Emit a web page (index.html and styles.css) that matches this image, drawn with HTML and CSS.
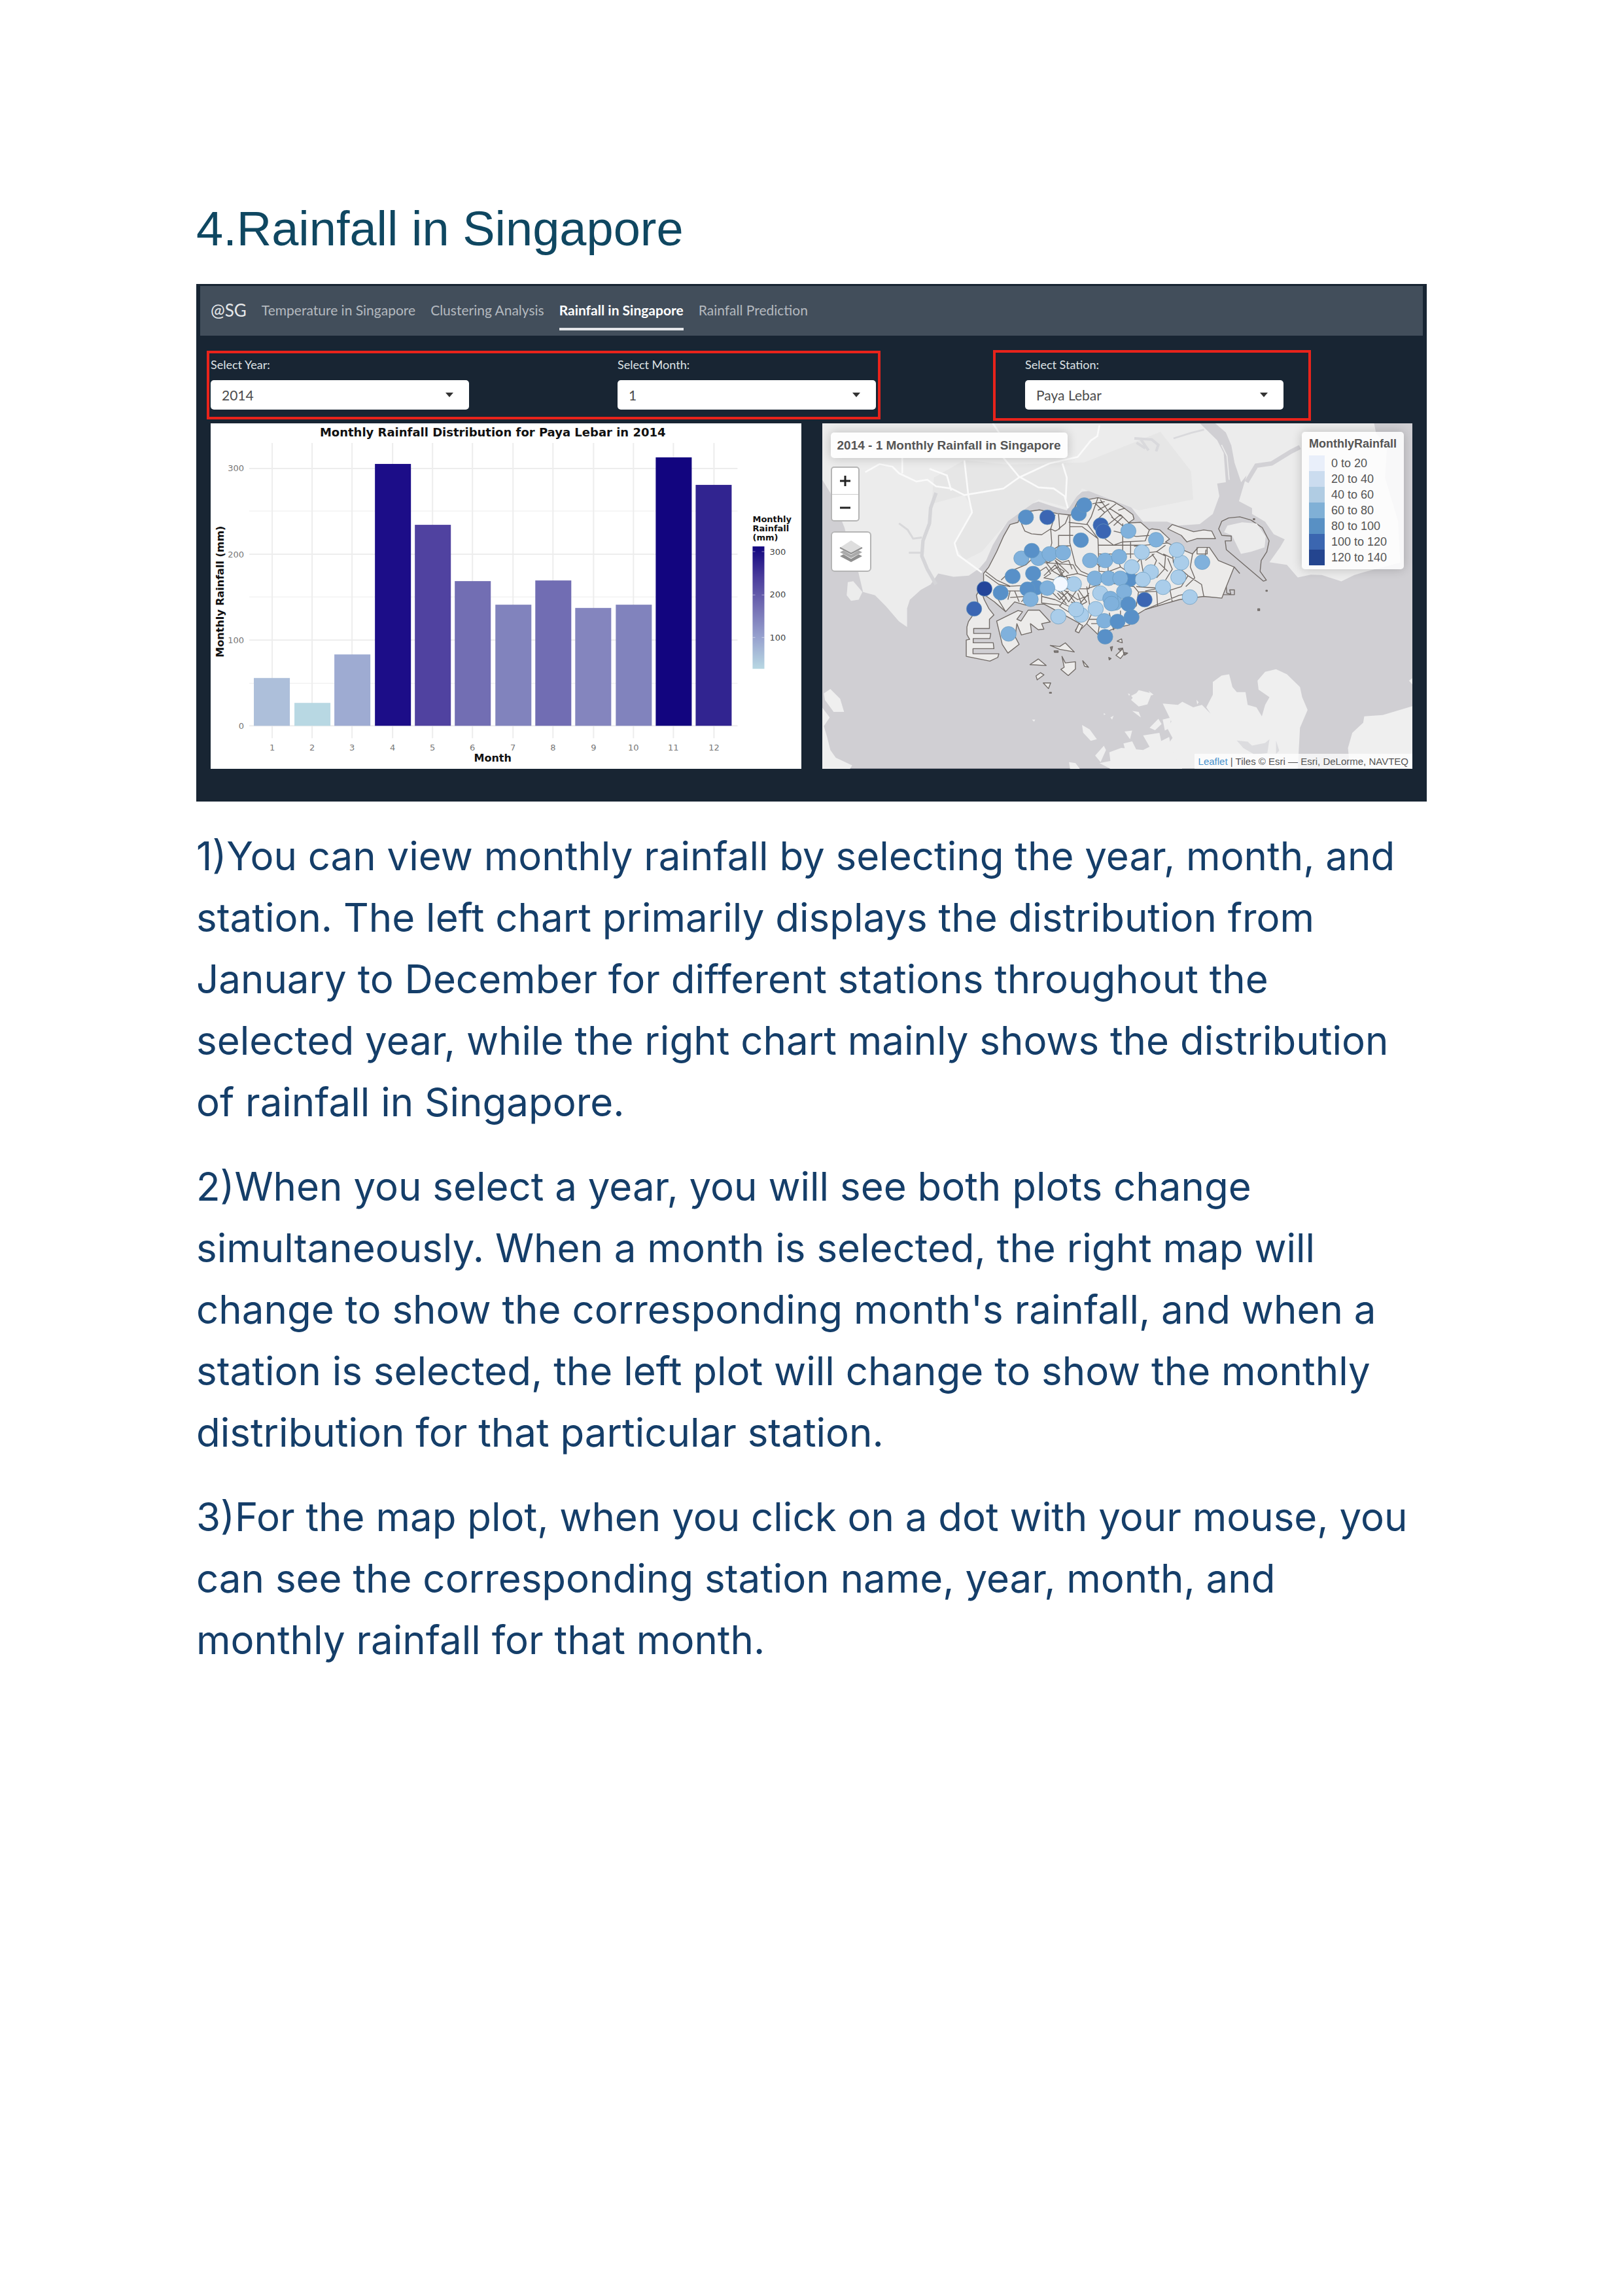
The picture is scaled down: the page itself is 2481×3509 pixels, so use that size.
FILE: index.html
```html
<!DOCTYPE html>
<html lang="en">
<head>
<meta charset="utf-8">
<title>Rainfall in Singapore</title>
<link rel="stylesheet" href="styles.css">
</head>
<body>
<main class="page">
<h1 class="heading">4.Rainfall in Singapore</h1>
<section class="app">
  <nav class="navbar">
    <a class="brand" href="#">@SG</a>
    <a class="tab" href="#">Temperature in Singapore</a>
    <a class="tab" href="#">Clustering Analysis</a>
    <a class="tab active" href="#">Rainfall in Singapore</a>
    <a class="tab" href="#">Rainfall Prediction</a>
  </nav>
  <form class="filters">
    <div class="field"><label for="year">Select Year:</label><select id="year"><option>2014</option></select></div>
    <div class="field"><label for="month">Select Month:</label><select id="month"><option>1</option></select></div>
    <div class="field"><label for="station">Select Station:</label><select id="station"><option>Paya Lebar</option></select></div>
    <span class="mark mark-date"></span>
    <span class="mark mark-station"></span>
  </form>
  <div class="panels">
    <svg class="chart" viewBox="0 0 902 528">
      <defs><linearGradient id="scale" x1="0" y1="0" x2="0" y2="1"><stop offset="0" stop-color="#12057f"/><stop offset=".25" stop-color="#4a3c9c"/><stop offset=".5" stop-color="#746fb4"/><stop offset=".75" stop-color="#98a3cf"/><stop offset="1" stop-color="#b8d8e3"/></linearGradient></defs>
      <path class="grid minor" d="M59 134H805M59 265H805M59 397H805"/>
      <path class="grid" d="M59 69H805M59 200H805M59 331H805M59 462H805M94 30V481M155 30V481M216 30V481M278 30V481M339 30V481M400 30V481M462 30V481M523 30V481M585 30V481M646 30V481M707 30V481M769 30V481"/>
      <rect x="66" y="389" width="55" height="73" fill="#adbfda"/>
      <rect x="128" y="427" width="55" height="35" fill="#b8d8e3"/>
      <rect x="189" y="353" width="55" height="109" fill="#9eabd2"/>
      <rect x="251" y="62" width="55" height="400" fill="#1c0d88"/>
      <rect x="312" y="155" width="55" height="307" fill="#5042a0"/>
      <rect x="373" y="241" width="55" height="221" fill="#726eb3"/>
      <rect x="435" y="277" width="55" height="185" fill="#8183bd"/>
      <rect x="496" y="240" width="55" height="222" fill="#716db3"/>
      <rect x="557" y="282" width="55" height="180" fill="#8485be"/>
      <rect x="619" y="277" width="55" height="185" fill="#8183bd"/>
      <rect x="680" y="52" width="55" height="410" fill="#12057f"/>
      <rect x="741" y="94" width="55" height="368" fill="#312490"/>
      <text class="axis-title chart-title" x="431" y="20">Monthly Rainfall Distribution for Paya Lebar in 2014</text>
      <text class="axis-title" x="431" y="517">Month</text>
      <text class="axis-title" transform="translate(20 257) rotate(-90)">Monthly Rainfall (mm)</text>
      <g class="tick end"><text x="51" y="73">300</text><text x="51" y="205">200</text><text x="51" y="336">100</text><text x="51" y="467">0</text></g>
      <g class="tick mid"><text x="94" y="500">1</text><text x="155" y="500">2</text><text x="216" y="500">3</text><text x="278" y="500">4</text><text x="339" y="500">5</text><text x="400" y="500">6</text><text x="462" y="500">7</text><text x="523" y="500">8</text><text x="585" y="500">9</text><text x="646" y="500">10</text><text x="707" y="500">11</text><text x="769" y="500">12</text></g>
      <g class="key-title"><text x="828" y="151">Monthly</text><text x="828" y="165">Rainfall</text><text x="828" y="179">(mm)</text></g>
      <rect x="828" y="188" width="18" height="187" fill="url(#scale)"/>
      <path d="M828 196h4m10 0h4M828 262h4m10 0h4M828 327h4m10 0h4" stroke="#fff" stroke-opacity=".5"/>
      <g class="tick dark"><text x="854" y="201">300</text><text x="854" y="266">200</text><text x="854" y="332">100</text></g>
    </svg>
    <div class="map">
      <svg class="tiles" viewBox="0 0 903 528">
        <rect width="903" height="528" fill="#d0cfd3"/>
        <!-- mainland, west and east of the strait -->
        <g transform="translate(-16 -17) scale(.3333)" fill="#ececec">
          <path d="M48 50V310L85 370 100 420 130 480 150 530 165 590 190 640 210 720 235 825 290 840 340 890 400 960 437 985V900L450 860 500 815 545 790 580 740 650 755 720 750 770 715 800 680 830 610 860 560 900 500 940 470 980 430 1040 410 1100 430 1170 450 1200 400 1240 365 1323 355 1400 375 1440 403 1490 467 1520 502 1630 502 1680 520 1780 513 1840 467 1870 385 1860 327 1900 321 1890 187 1860 128 1780 50Z"/>
          <path d="M165 780 190 775 232 825 215 860 180 865 160 840Z"/>
          <path d="M1850 50 1900 93 1925 152 1940 233 1970 321 1995 290 1960 408 2020 440 2020 467 2080 502 2120 560 2170 583 2150 618 2100 688 2180 700 2230 758 2290 745 2340 747 2430 776 2490 747 2530 735 2700 690 2690 500 2630 300 2640 150 2590 100 2580 50Z"/>
          <path d="M550 420 700 380 740 450 650 600 700 680 780 640 900 500 1040 400 1180 440 1240 350 1500 450 1750 400 1740 270 1600 90 1250 230 900 240 700 220 560 300Z" fill="#e6e6e6"/>
          <path d="M1480 120 1560 125 1590 150 1580 180M1490 140 1530 165M1510 125 1545 175" fill="none" stroke="#d9d9dc" stroke-width="12"/>
          <path d="M400 510 440 540 465 580 505 575M445 645H505" fill="none" stroke="#d8d8da" stroke-width="9"/>
          <path d="M570 370 545 440 540 510 510 590 505 660 530 720 570 790" fill="none" stroke="#d5d5d8" stroke-width="16"/>
          <path d="M1995 320 2040 245 2110 235 2200 180 2240 160" fill="none" stroke="#d2d1d5" stroke-width="20"/>
          <path d="M1660 120 1740 95 1800 80" fill="none" stroke="#d9d9dc" stroke-width="8"/>
          <path d="M830 50 870 110 880 210 950 295 1040 345 1110 350 1160 385 1175 440M245 275 310 238 370 250 400 280 480 318 530 310 570 340 640 350 700 380 790 365 880 350 950 300 1090 235 1220 205 1280 130 1310 110 1320 60M415 100V280M700 220 718 380 735 460 655 600 670 655 780 735M540 260 620 290 640 360M1150 235 1170 300 1165 400" fill="none" stroke="#fafafa" stroke-width="8"/>
          <path d="M1880 150 1905 200 1915 310" fill="none" stroke="#ebebeb" stroke-width="5"/>
        </g>
        <!-- islands to the south -->
        <g transform="translate(444 -17) scale(.3333 .3891)" fill="#efefef">
          <path d="M230 1145 300 1150 320 1138 370 1160 410 1150 450 1185 430 1160 460 1110 460 1060 500 1035 535 1030 550 1080 570 1100 610 1100 620 1150 660 1160 685 1195 700 1150 720 1120 670 1090 665 1055 700 1020 750 1010 800 1030 860 1080 870 1120 895 1170 860 1240 850 1400H200L180 1330 140 1270 215 1260 225 1300 250 1310 275 1280 250 1240 270 1215Z"/>
          <path d="M1376 1155 1240 1190 1155 1195 1150 1220 1100 1260 1080 1320 1090 1400H1376ZM1376 1045 1360 1055 1376 1070Z"/>
          <path d="M85 1115 130 1095 150 1110 160 1130 120 1150ZM70 1105 80 1108 76 1115ZM165 1095 188 1110 178 1113ZM170 1240 210 1205 225 1225 195 1250ZM385 1130 395 1140 388 1148Z"/>
          <path d="M570 1290 620 1295 640 1310 700 1300 720 1285 710 1340 650 1345 600 1320ZM750 1290 765 1330 750 1343Z" fill="#dcdcdf"/>
        </g>
        <g transform="translate(-16 253) scale(.3333)" fill="#efefef">
          <path d="M55 480 85 460 130 505 148 565 100 565 60 510ZM48 545 82 590 55 630 70 680 85 740 110 775 185 810 175 826H48ZM1240 625 1275 645 1308 690 1280 698 1245 660ZM1465 510 1500 465 1560 480 1540 530 1500 540ZM1470 560 1500 565 1510 590ZM1435 655 1470 650 1460 690ZM1430 710 1470 700 1490 740 1440 745ZM1300 765 1340 720 1350 740 1325 795ZM1365 750 1420 730 1520 740 1640 680 1650 740 1700 826H1370L1320 800 1370 790ZM1180 795 1210 800 1230 826H1185ZM1010 600 1025 600 1020 610ZM1340 570 1348 575 1340 580ZM1370 590 1385 582 1378 600ZM1610 600 1650 590 1640 640 1620 650Z"/>
        </g>
        <!-- planning areas -->
        <g class="areas" transform="translate(184 93) scale(.3444 .3333)">
          <path d="M182 410 205 380 240 310 270 240 300 185 335 175 350 130 430 118 510 135 570 142 600 80 690 62 760 80 800 105 845 140 850 160 825 178 880 175 918 210 930 205 965 210 1008 252 990 265 1040 290 1110 320 1135 290 1185 290 1225 350 1295 380 1260 470 1240 523 1160 515 1050 530 900 575 860 600 830 645 770 660 690 690 640 640 600 680 590 670 610 640 540 600 450 550 370 555 320 540 280 585 230 540 175 500 185 530 205 570 228 600 208 620V662H138V685H214L210 708H136V728H225L228 755H135V778H250L245 795 210 812 105 790V715L120 712 108 690V655L115 630 135 600 160 560 150 510 182 450Z"/>
          <path d="M240 628 335 580 355 585 330 620 348 628 380 578H430L478 632 440 640 450 665 425 668 390 640 395 680 350 692 330 640 322 700 340 735 290 775 265 735Z"/>
          <path d="M1000 205 1020 185 1115 218 1160 210 1195 215 1212 250H1130L1085 265 1060 235ZM478 740 520 745 545 728 585 770 520 758ZM388 828 425 802 460 832ZM530 790 545 820 590 815 590 848 558 878 525 850 540 840ZM415 880 435 865 450 875 420 898ZM447 912H480L470 938ZM622 810 648 840 630 835ZM775 720 795 710 798 728ZM770 785 800 755 805 780 790 800ZM590 675 605 640 622 648 605 682Z"/>
          <path class="shore" d="M1255 260H1282V238L1240 235 1226 205 1240 170 1270 155 1320 150 1370 165 1420 200 1450 260 1440 310 1415 350 1410 400 1438 440 1425 445 1260 300ZM1295 380 1320 410M1260 470 1262 500 1280 505 1275 485H1296V507H1245"/>
          <path class="islet" d="M1265 190 1330 175 1395 180 1435 240 1430 290 1370 310 1325 320 1285 235 1250 220Z"/>
          <path class="lines" d="M350 180 365 215 395 228 440 232 480 205M480 205 500 140M515 138 520 205 500 215 480 205 485 270 475 310 515 285V235H580M515 205 545 180 560 142M565 142V270L590 370 615 400 660 420M565 195 620 195 690 250 695 400 760 405M515 283H570M560 175 640 185 660 150 690 62M640 180 690 250M690 280H880M690 320 850 320M735 320V400M800 180V320M835 265V340M720 250 760 280 800 265 900 260 918 210M760 215 860 240 918 235M680 90 720 130 690 160 730 190 790 140 830 180M700 70 760 160M720 130 770 90M750 150 810 200M740 110 800 150 760 190M780 120 810 110M665 90 720 80M690 120 740 90M850 285 1000 270M870 320 950 310 990 280M930 320 950 350 910 450M950 310 990 330 985 390 950 430M900 350 940 320M1020 310 1025 360 1090 420 1150 460 1160 515M1000 340 1020 390 990 440M1110 320 1100 380 1120 430 1080 470M1130 290V320H1175V290M1170 300 1165 340M1090 420 1060 470 1000 490 870 495 860 560M900 490 950 480 1010 485 1020 540M860 470 1000 480M950 480 955 560M900 575 1050 510 1100 500M450 360 580 370 600 410 660 430 650 480 520 480M430 400 460 380 480 410 450 430 500 440 540 400 510 380 480 400M450 420 500 370 530 420 570 430M460 360 490 400 540 430 500 350 560 410M600 410 550 420 570 480M440 345 470 360 500 340 530 360 560 350 575 390M190 400 240 440 300 468 360 465 440 470M190 415 250 460 300 470M260 440 300 400 370 370 400 340M290 490H360M300 490 290 530M320 490 340 540M230 500 280 585M300 520 370 515 350 540M440 490 440 545 520 555M440 515 500 530 560 560M500 480 550 520 520 560 580 600M520 480 560 540 600 480 640 540 570 580M550 490 600 560 650 500M480 490 520 530 560 490M510 500 550 550M530 480 600 530 650 510M600 500 620 560 570 540M640 470 660 600 640 640M650 620H700L690 690M660 640 700 640M740 590 760 670M790 580V650M860 560H810M700 380 660 340M740 400 790 380 850 420 900 400M770 320 790 380M830 400 880 340 890 400M960 360 1000 400M980 320 1020 340M660 440 850 470 870 495M640 480 700 460"/>
          <path class="isles" d="M745 748 755 745 750 765ZM738 795 748 800 740 806ZM780 755 800 752 790 765ZM805 772 822 775 808 785ZM495 765H513V772H497ZM1400 572h8v8h-8ZM1436 487h6v4h-6ZM1380 158h6v5h-6ZM475 955h8v4h-8Z"/>
        </g>
        <g class="dots" transform="translate(184 93) scale(.3444 .3333)">
          <g class="c60"><circle cx="825" cy="215" r="34"/><circle cx="948" cy="255" r="34"/><circle cx="350" cy="340" r="34"/><circle cx="425" cy="340" r="34"/><circle cx="475" cy="320" r="34"/><circle cx="535" cy="315" r="34"/><circle cx="655" cy="350" r="34"/><circle cx="722" cy="350" r="34"/><circle cx="784" cy="333" r="34"/><circle cx="1153" cy="358" r="34"/></g>
          <g class="c80"><circle cx="370" cy="152" r="34"/><circle cx="605" cy="135" r="34"/><circle cx="629" cy="96" r="34"/><circle cx="614" cy="257" r="34"/><circle cx="396" cy="305" r="34"/><circle cx="311" cy="423" r="34"/><circle cx="402" cy="410" r="34"/><circle cx="415" cy="475" r="34"/><circle cx="377" cy="482" r="34"/><circle cx="258" cy="498" r="34"/><circle cx="830" cy="437" r="34"/></g>
          <g class="c100"><circle cx="465" cy="152" r="34"/><circle cx="702" cy="188" r="34"/><circle cx="714" cy="216" r="34"/><circle cx="140" cy="572" r="34"/><circle cx="897" cy="530" r="34"/></g>
          <circle class="c120" cx="186" cy="480" r="34"/>
          <g class="c40"><circle cx="885" cy="312" r="34"/><circle cx="1060" cy="360" r="34"/><circle cx="1040" cy="302" r="34"/><circle cx="840" cy="380" r="34"/><circle cx="925" cy="403" r="34"/><circle cx="1047" cy="427" r="34"/><circle cx="889" cy="437" r="34"/><circle cx="979" cy="473" r="34"/><circle cx="1098" cy="518" r="34"/><circle cx="583" cy="458" r="34"/><circle cx="700" cy="500" r="34"/><circle cx="680" cy="572" r="34"/><circle cx="615" cy="600" r="34"/><circle cx="593" cy="575" r="34"/><circle cx="514" cy="608" r="34"/></g>
          <circle class="c0" cx="523" cy="458" r="34"/>
          <g class="c60"><circle cx="465" cy="477" r="34"/><circle cx="391" cy="528" r="34"/><circle cx="676" cy="432" r="34"/><circle cx="737" cy="432" r="34"/><circle cx="789" cy="432" r="34"/><circle cx="806" cy="493" r="34"/><circle cx="765" cy="545" r="34"/><circle cx="745" cy="525" r="34"/><circle cx="750" cy="548" r="34"/><circle cx="718" cy="627" r="34"/><circle cx="293" cy="687" r="34"/></g>
          <g class="c80"><circle cx="825" cy="550" r="34"/><circle cx="777" cy="630" r="34"/><circle cx="839" cy="610" r="34"/><circle cx="722" cy="700" r="34"/></g>
        </g>
      </svg>
      <div class="map-left">
        <div class="map-title">2014 - 1 Monthly Rainfall in Singapore</div>
        <div class="zoom"><button type="button" aria-label="Zoom in"><svg viewBox="0 0 16 16"><path d="M0 8H16M8 0V16"/></svg></button><button type="button" aria-label="Zoom out"><svg viewBox="0 0 16 16"><path d="M0 8H16"/></svg></button></div>
        <button class="layers" type="button" aria-label="Layers"><svg viewBox="0 0 36 36"><path d="M1 25 18 16 35 25 18 34Z" fill="#8f8f8f"/><path d="M1 19 18 10 35 19 18 29Z" fill="#fff"/><path d="M1 19 18 10 35 19 18 28Z" fill="#aaa"/><path d="M1 13 18 4 35 13 18 23Z" fill="#fff"/><path d="M1 12 18 1 35 12 18 21Z" fill="#dedede"/><path d="M1 12 18 21 35 12" fill="none" stroke="#909090" stroke-width="2"/></svg></button>
      </div>
      <div class="legend">
        <strong>MonthlyRainfall</strong>
        <ul><li class="k0">0 to 20</li><li class="k20">20 to 40</li><li class="k40">40 to 60</li><li class="k60">60 to 80</li><li class="k80">80 to 100</li><li class="k100">100 to 120</li><li class="k120">120 to 140</li></ul>
      </div>
      <div class="credit"><a href="#">Leaflet</a> | Tiles © Esri — Esri, DeLorme, NAVTEQ</div>
    </div>
  </div>
</section>
<p>1)You can view monthly rainfall by selecting the year, month, and<br>station. The left chart primarily displays the distribution from<br>January to December for different stations throughout the<br>selected year, while the right chart mainly shows the distribution<br>of rainfall in Singapore.</p>
<p>2)When you select a year, you will see both plots change<br>simultaneously. When a month is selected, the right map will<br>change to show the corresponding month's rainfall, and when a<br>station is selected, the left plot will change to show the monthly<br>distribution for that particular station.</p>
<p>3)For the map plot, when you click on a dot with your mouse, you<br>can see the corresponding station name, year, month, and<br>monthly rainfall for that month.</p>
</main>
</body>
</html>
```
FILE: styles.css
```css
* { box-sizing: border-box; }
body { margin: 0; background: #fff; color: #153e69; font-family: Inter, sans-serif; }
.page { padding: 300px 300px 100px; }
.heading { margin: 0 0 34px; font-family: "Liberation Sans", sans-serif; font-size: 74px; line-height: 100px; font-weight: 400; color: #0f4761; }
.app { background: #182533; padding: 3px 6px 50px; margin-bottom: 36px; font-family: Lato, sans-serif; }
.navbar { display: flex; align-items: stretch; gap: 23px; height: 76px; padding: 0 16px 8px; background: #424e5b; line-height: 68px; font-size: 21px; }
.navbar a { color: #b4b9bf; text-decoration: none; padding-top: 3px; white-space: nowrap; }
.navbar .brand { color: #e6e8ea; font-size: 26px; }
.navbar .active { color: #fff; font-weight: 700; border-bottom: 4px solid #e3e5e8; }
.filters { position: relative; display: grid; grid-template-columns: 622fr 623fr 592fr; margin: 0 16px; padding: 32px 0 21px; }
.field { position: relative; display: flex; flex-direction: column; gap: 12px; width: 395px; }
.field label { font-size: 18px; line-height: 24px; color: #dfe3e6; }
.field select { appearance: none; height: 45px; border: 0; border-radius: 5px; padding: 0 17px; font: 21px Lato, sans-serif; color: #4c4c4c; background: #fff; }
.field::after { content: ""; position: absolute; right: 24px; bottom: 19px; border: solid transparent; border-width: 7px 6px 0; border-top-color: #333; pointer-events: none; }
.mark { position: absolute; border: 4px solid #e8231b; pointer-events: none; }
.mark-date { left: -6px; top: 23px; width: 1030px; height: 105px; }
.mark-station { left: 1196px; top: 22px; width: 486px; height: 108px; }
.panels { display: grid; grid-template-columns: 1fr 1fr; gap: 32px; margin: 0 16px; }
.chart { display: block; width: 100%; background: #fff; font-family: "DejaVu Sans", sans-serif; }
.grid { fill: none; stroke: #ededed; stroke-width: 2; }
.minor { stroke-width: 1; }
.axis-title { font-size: 16px; font-weight: 700; text-anchor: middle; fill: #111; }
.chart-title { font-size: 18px; }
.tick { font-size: 13px; fill: #777; }
.end { text-anchor: end; }
.mid { text-anchor: middle; }
.dark { fill: #444; }
.key-title { font-size: 13px; font-weight: 700; fill: #111; }
.map { position: relative; font-family: "Liberation Sans", sans-serif; color: #555; }
.tiles { display: block; width: 100%; }
.areas path { fill: #ecebea; stroke: #716b67; stroke-width: 4; stroke-linejoin: round; }
.areas .shore, .areas .lines { fill: none; }
.areas .islet { stroke: none; fill: #ececec; }
.areas .isles { fill: #8a8a8c; }
.dots circle { stroke: #6699bd; stroke-width: 2; }
.c0 { fill: #f3f8ff; }
.c40 { fill: #aacdea; }
.c60 { fill: #80b1dc; }
.c80 { fill: #5890c8; }
.c100 { fill: #3b66b3; }
.c120 { fill: #24459a; }
.map-left { position: absolute; left: 13px; top: 14px; display: flex; flex-direction: column; align-items: flex-start; }
.map-title { padding: 0 10px; font-size: 19px; line-height: 39px; font-weight: 700; white-space: nowrap; background: #fdfdfd; border-radius: 5px; box-shadow: 0 0 16px rgba(0,0,0,.2); margin-bottom: 13px; }
.zoom { display: flex; flex-direction: column; width: 44px; border: 2px solid #b5b5b5; border-radius: 5px; background: #fff; margin-bottom: 15px; }
.zoom button { display: grid; place-items: center; height: 40px; padding: 0; border: 0; background: none; }
.zoom button + button { border-top: 1px solid #ccc; }
.zoom svg { width: 16px; height: 16px; fill: none; stroke: #222; stroke-width: 3; }
.layers { width: 62px; height: 62px; padding: 0; display: grid; place-items: center; background: #fff; border: 2px solid #b5b5b5; border-radius: 6px; }
.layers svg { width: 36px; height: 36px; }
.legend { position: absolute; right: 13px; top: 13px; padding: 6px 11px; font-size: 18px; background: rgba(255,255,255,.85); border-radius: 5px; box-shadow: 0 0 16px rgba(0,0,0,.2); }
.legend strong { display: block; line-height: 24px; margin-bottom: 6px; }
.legend ul { list-style: none; margin: 0; padding: 0; }
.legend li { display: flex; gap: 10px; line-height: 24px; }
.legend li::before { content: ""; width: 24px; }
.legend .k0::before { background: #e9effa; }
.legend .k20::before { background: #cbdcef; }
.legend .k40::before { background: #b0cce3; }
.legend .k60::before { background: #80b0d6; }
.legend .k80::before { background: #5890c4; }
.legend .k100::before { background: #3b66b0; }
.legend .k120::before { background: #24458f; }
.credit { position: absolute; right: 0; bottom: 0; padding: 0 6px; font-size: 15px; line-height: 23px; background: rgba(255,255,255,.75); }
.credit a { color: #4a92cc; text-decoration: none; }
p { margin: 0 0 35px; font-size: 60px; line-height: 94px; white-space: nowrap; }
```
